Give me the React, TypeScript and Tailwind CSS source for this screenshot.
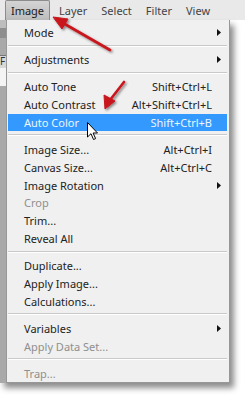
import React from "react";

type Item =
  | { type: "sep" }
  | { type: "item"; label: string; shortcut?: string; sub?: boolean; disabled?: boolean; active?: boolean };

const items: Item[] = [
  { type: "item", label: "Mode", sub: true },
  { type: "sep" },
  { type: "item", label: "Adjustments", sub: true },
  { type: "sep" },
  { type: "item", label: "Auto Tone", shortcut: "Shift+Ctrl+L" },
  { type: "item", label: "Auto Contrast", shortcut: "Alt+Shift+Ctrl+L" },
  { type: "item", label: "Auto Color", shortcut: "Shift+Ctrl+B", active: true },
  { type: "sep" },
  { type: "item", label: "Image Size...", shortcut: "Alt+Ctrl+I" },
  { type: "item", label: "Canvas Size...", shortcut: "Alt+Ctrl+C" },
  { type: "item", label: "Image Rotation", sub: true },
  { type: "item", label: "Crop", disabled: true },
  { type: "item", label: "Trim..." },
  { type: "item", label: "Reveal All" },
  { type: "sep" },
  { type: "item", label: "Duplicate..." },
  { type: "item", label: "Apply Image..." },
  { type: "item", label: "Calculations..." },
  { type: "sep" },
  { type: "item", label: "Variables", sub: true },
  { type: "item", label: "Apply Data Set...", disabled: true },
  { type: "sep" },
  { type: "item", label: "Trap...", disabled: true },
];

function SubArrow() {
  return (
    <svg width="4" height="7" viewBox="0 0 4 7">
      <path d="M0 0 L4 3.5 L0 7 Z" fill="#111" />
    </svg>
  );
}

export default function App() {
  return (
    <div
      className="relative w-[245px] h-[400px] bg-white overflow-hidden text-[11px] leading-none"
      style={{ fontFamily: '"Segoe UI", "Noto Sans", "Open Sans", sans-serif' }}
    >
      {/* menubar */}
      <div className="flex h-[20px] items-stretch bg-[#e9e9e9] text-[#444] whitespace-nowrap">
        <div className="w-[5px] shrink-0" />
        <div className="w-[45px] shrink-0 flex items-center justify-center bg-gradient-to-b from-[#d4d4d4] to-[#bdbdbd] border border-b-0 border-[#8c8c8c] rounded-t-[2px] text-[#1a1a1a]">
          Image
        </div>
        <div className="flex items-center pl-[9px] pr-[14px]">Layer</div>
        <div className="flex items-center pr-[14px]">Select</div>
        <div className="flex items-center pr-[14px]">Filter</div>
        <div className="flex items-center">View</div>
      </div>

      {/* body */}
      <div className="flex">
        <div className="flex w-[230px] h-[363px] shadow-[4px_5px_6px_rgba(0,0,0,0.45)]">
          {/* left strip of app behind */}
          <div className="w-[6px] flex flex-col bg-[#a9a9a9]">
            <div className="h-[8px] bg-[#bdbdbd]" />
            <div className="h-[10px] bg-[#8e8e8e]" />
            <div className="h-[17px]" />
            <div className="h-[13px] bg-[#d8d8d8] border-t border-[#777] text-[10px] text-[#333] overflow-hidden">F</div>
            <div className="h-[18px] bg-[#f4f4f4]" />
          </div>
          {/* menu panel */}
          <div className="flex-1 flex flex-col bg-[#f0f0f0] border border-t-0 border-[#979797] pt-[4px] text-[#222]">
            {items.map((it, i) =>
              it.type === "sep" ? (
                <div key={i} className="h-[9px] pt-[3px] pl-[1px] pr-[2px]">
                  <div className="h-[1px] bg-[#c9c9c9]" />
                  <div className="h-[1px] bg-white" />
                </div>
              ) : (
                <div
                  key={i}
                  className={
                    "h-[18px] flex items-center ml-[1px] mr-[2px] pl-[16px] " +
                    (it.active ? "bg-[#3399ff] text-[#eef5ff]" : it.disabled ? "text-[#8f8f8f]" : "")
                  }
                >
                  <span className="flex-1">{it.label}</span>
                  {it.shortcut && <span>{it.shortcut}</span>}
                  <span className="w-[15px] flex items-center pl-[5px]">{it.sub && <SubArrow />}</span>
                </div>
              )
            )}
          </div>
        </div>
      </div>

      {/* red arrows */}
      <svg className="absolute left-0 top-0 pointer-events-none" width="245" height="400" viewBox="0 0 245 400">
        <defs>
          <filter id="ds" x="-20%" y="-20%" width="140%" height="140%">
            <feDropShadow dx="1.5" dy="1.5" stdDeviation="1.2" floodColor="#000" floodOpacity="0.45" />
          </filter>
        </defs>
        <g filter="url(#ds)" fill="#c8161d" stroke="#c8161d">
          <line x1="110" y1="50" x2="63" y2="23" strokeWidth="2.6" strokeLinecap="round" />
          <path d="M53 17 L68 19 L62 29 Z" strokeWidth="1" strokeLinejoin="round" />
          <line x1="124" y1="82" x2="110" y2="100" strokeWidth="2.6" strokeLinecap="round" />
          <path d="M105 109 L104 95 L115 101 Z" strokeWidth="1" strokeLinejoin="round" />
        </g>
      </svg>

      {/* mouse cursor */}
      <svg className="absolute left-[87px] top-[122px]" width="12" height="19" viewBox="0 0 12 19">
        <path d="M0.5 0.5 L0.5 15 L4 11.7 L6.5 17.5 L8.6 16.6 L6.1 11 L10.5 11 Z" fill="#fff" stroke="#000" strokeWidth="1" strokeLinejoin="round" />
      </svg>
    </div>
  );
}
